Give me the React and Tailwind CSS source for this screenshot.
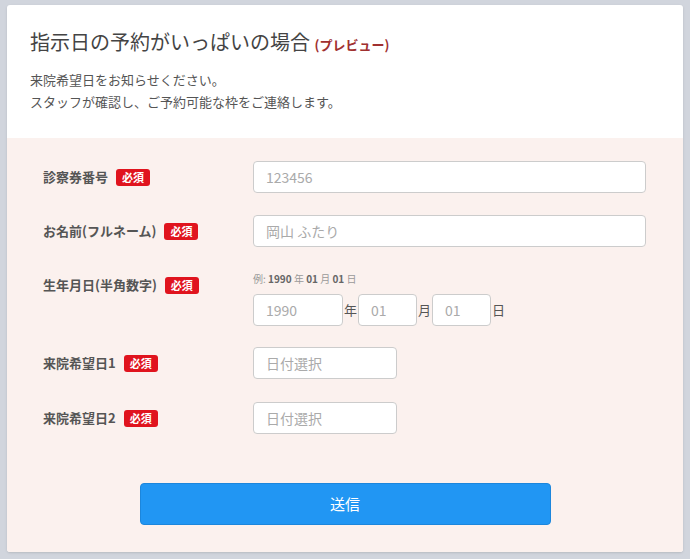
import React from 'react';

const font = { fontFamily: '"Noto Sans CJK JP", "Noto Sans", sans-serif' };

const Badge = () => (
    <span className="ml-2 inline-flex items-center h-[17px] px-[6px] rounded-[3px] bg-[#e0141e] text-white text-[11px] font-bold leading-none">必須</span>
);

const Label = ({ children }) => (
    <div className="w-[210px] shrink-0 flex items-center text-[13px] font-bold text-[#555] h-[32px]">
        {children}
        <Badge />
    </div>
);

const inputCls = "h-[32px] border border-[#ccc] rounded-[4px] bg-white px-3 text-[14px] text-[#555] placeholder-[#aaa] outline-none";

export default function App() {
    return (
        <div className="min-h-[559px] bg-[#d1d5dd] pt-[5px] px-[7px]" style={font}>
            <div className="w-[676px] bg-white rounded-[3px] shadow overflow-hidden">
                <div className="px-[23px] pt-[24px] pb-[25px]">
                    <h1 className="text-[20px] text-[#444] leading-[26px]">
                        指示日の予約がいっぱいの場合 <span className="text-[13px] font-bold text-[#a03030]">(プレビュー)</span>
                    </h1>
                    <p className="mt-[11px] text-[13px] text-[#555] leading-[22px]">
                        来院希望日をお知らせください。<br />スタッフが確認し、ご予約可能な枠をご連絡します。
                    </p>
                </div>
                <div className="bg-[#fbf1ee] px-[36px] pt-[23px] pb-[27px]">
                    <div className="flex">
                        <Label>診察券番号</Label>
                        <input className={`${inputCls} w-[393px]`} placeholder="123456" />
                    </div>
                    <div className="flex mt-[22px]">
                        <Label>お名前(フルネーム)</Label>
                        <input className={`${inputCls} w-[393px]`} placeholder="岡山 ふたり" />
                    </div>
                    <div className="flex mt-[22px]">
                        <div className="self-start"><Label>生年月日(半角数字)</Label></div>
                        <div>
                            <div className="text-[10px] text-[#999] mt-[3px] leading-[14px]">
                                例: <b className="text-[#666]">1990</b> 年 <b className="text-[#666]">01</b> 月 <b className="text-[#666]">01</b> 日
                            </div>
                            <div className="flex items-center mt-[8px] text-[13px] text-[#555]">
                                <input className={`${inputCls} w-[90px]`} placeholder="1990" />
                                <span className="px-[1px]">年</span>
                                <input className={`${inputCls} w-[59px]`} placeholder="01" />
                                <span className="px-[1px]">月</span>
                                <input className={`${inputCls} w-[59px]`} placeholder="01" />
                                <span className="px-[1px]">日</span>
                            </div>
                        </div>
                    </div>
                    <div className="flex mt-[21px]">
                        <Label>来院希望日1</Label>
                        <input className={`${inputCls} w-[144px]`} placeholder="日付選択" />
                    </div>
                    <div className="flex mt-[23px]">
                        <Label>来院希望日2</Label>
                        <input className={`${inputCls} w-[144px]`} placeholder="日付選択" />
                    </div>
                    <div className="flex justify-center mt-[49px]">
                        <button className="w-[411px] h-[42px] rounded-[4px] bg-[#2196f3] border border-[#1c86dc] text-white text-[15px]">送信</button>
                    </div>
                </div>
            </div>
        </div>
    );
}
